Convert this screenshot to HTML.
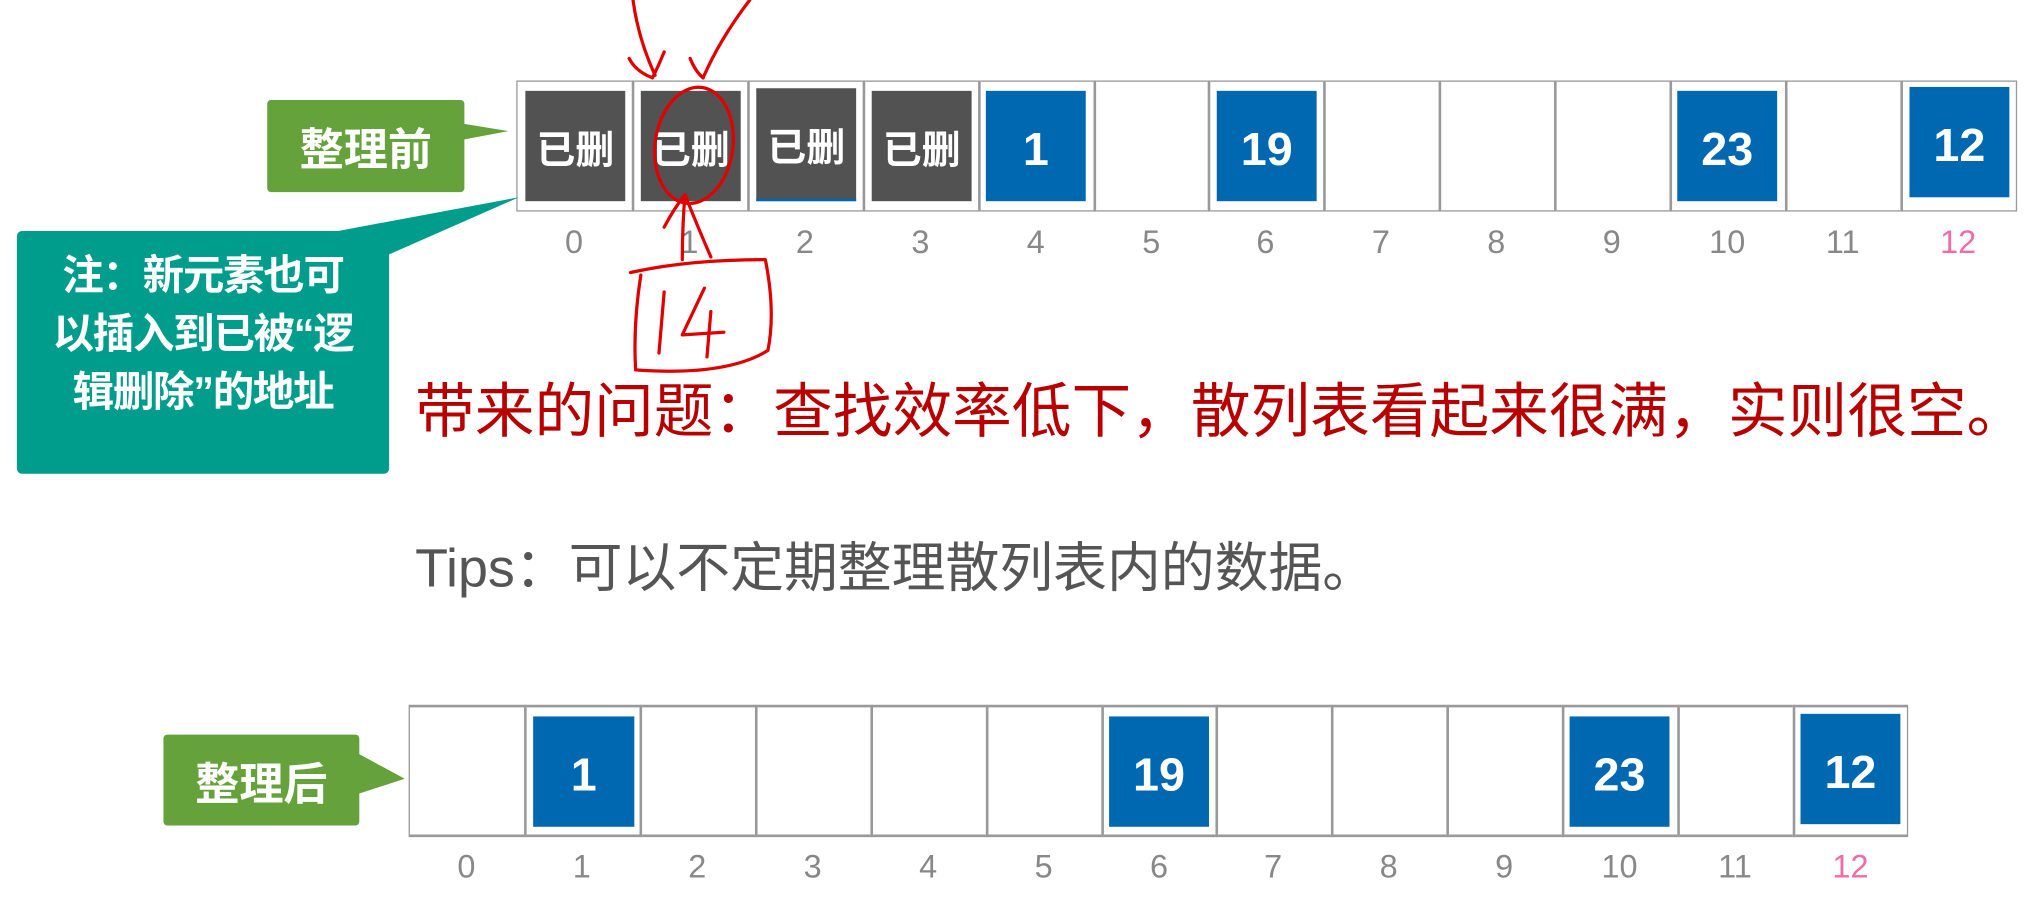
<!DOCTYPE html>
<html><head><meta charset="utf-8"><style>
html,body{margin:0;padding:0;background:#fff;overflow:hidden;}
body{width:2034px;height:915px;}
#w{position:absolute;left:0;top:0;width:1568px;height:705px;transform:scale(1.29719,1.2979);transform-origin:0 0;font-family:"Liberation Sans","Noto Sans CJK SC",sans-serif;}
.a{position:absolute;}
.cell{position:absolute;border:1px solid #999;box-sizing:border-box;background:#fff;}
.box{position:absolute;color:#fff;display:flex;align-items:center;justify-content:center;font-weight:bold;}
.blue{background:#0068b0;font-size:36px;padding-top:4px;box-sizing:border-box;}
.gray{background:#525252;font-size:30px;font-weight:bold;}
.idx{position:absolute;width:89px;text-align:center;color:#888;font-size:25px;}
.lbl{position:absolute;background:#66a23c;color:#fff;font-weight:bold;font-size:34px;display:flex;align-items:center;justify-content:center;border-radius:3px;}
</style></head><body><div id="w">

<div class="a" style="left:398px;top:62px;width:1157px;height:101px;border:1px solid #999;box-sizing:border-box;"></div>
<div class="cell" style="left:487px;top:62px;width:1px;height:101px;"></div>
<div class="cell" style="left:576px;top:62px;width:1px;height:101px;"></div>
<div class="cell" style="left:665px;top:62px;width:1px;height:101px;"></div>
<div class="cell" style="left:754px;top:62px;width:1px;height:101px;"></div>
<div class="cell" style="left:843px;top:62px;width:1px;height:101px;"></div>
<div class="cell" style="left:931px;top:62px;width:1px;height:101px;"></div>
<div class="cell" style="left:1020px;top:62px;width:1px;height:101px;"></div>
<div class="cell" style="left:1109px;top:62px;width:1px;height:101px;"></div>
<div class="cell" style="left:1198px;top:62px;width:1px;height:101px;"></div>
<div class="cell" style="left:1287px;top:62px;width:1px;height:101px;"></div>
<div class="cell" style="left:1376px;top:62px;width:1px;height:101px;"></div>
<div class="cell" style="left:1465px;top:62px;width:1px;height:101px;"></div>

<div class="box gray" style="left:405px;top:70px;width:77px;height:85px;">已删</div>
<div class="box gray" style="left:494px;top:70px;width:77px;height:85px;">已删</div>
<div class="box gray" style="left:583px;top:68px;width:77px;height:85px;border-bottom:2px solid #0068b0;">已删</div>
<div class="box gray" style="left:672px;top:70px;width:77px;height:85px;">已删</div>
<div class="box blue" style="left:760px;top:70px;width:77px;height:85px;">1</div>
<div class="box blue" style="left:938px;top:70px;width:77px;height:85px;">19</div>
<div class="box blue" style="left:1293px;top:70px;width:77px;height:85px;">23</div>
<div class="box blue" style="left:1472px;top:67px;width:77px;height:85px;">12</div>

<div class="idx" style="left:398px;top:173px;">0</div>
<div class="idx" style="left:487px;top:173px;">1</div>
<div class="idx" style="left:576px;top:173px;">2</div>
<div class="idx" style="left:665px;top:173px;">3</div>
<div class="idx" style="left:754px;top:173px;">4</div>
<div class="idx" style="left:843px;top:173px;">5</div>
<div class="idx" style="left:931px;top:173px;">6</div>
<div class="idx" style="left:1020px;top:173px;">7</div>
<div class="idx" style="left:1109px;top:173px;">8</div>
<div class="idx" style="left:1198px;top:173px;">9</div>
<div class="idx" style="left:1287px;top:173px;">10</div>
<div class="idx" style="left:1376px;top:173px;">11</div>
<div class="idx" style="left:1465px;top:173px;color:#f06ba8;">12</div>

<svg class="a" style="left:0;top:0" width="1568" height="705">
<polygon points="355,95 392,101 355,108" fill="#66a23c"/>
<polygon points="255,179 400,152 300,196" fill="#009c8c"/>
<polygon points="275,580 312,600 275,612" fill="#66a23c"/>
</svg>
<div class="lbl" style="left:206px;top:77px;width:152px;height:71px;">整理前</div>
<div class="a" style="left:13px;top:178px;width:287px;height:187px;background:#009c8c;border-radius:4px;color:#fff;font-weight:bold;font-size:32px;line-height:45px;text-align:center;padding-top:12px;box-sizing:border-box;white-space:nowrap;letter-spacing:-1px;">注：新元素也可<br>以插入到已被“逻<br>辑删除”的地址</div>

<div class="a" style="left:320px;top:288px;color:#b80000;font-size:46px;white-space:nowrap;line-height:58px;">带来的问题：查找效率低下，散列表看起来很满，实则很空。</div>
<div class="a" style="left:320px;top:413px;color:#555;font-size:41.5px;white-space:nowrap;line-height:50px;">Tips：可以不定期整理散列表内的数据。</div>

<div class="a" style="left:315px;top:543px;width:1156px;height:102px;border:1px solid #999;border-top:2px solid #999;border-bottom:2px solid #999;box-sizing:border-box;"></div>
<div class="cell" style="left:404px;top:543px;width:1px;height:102px;"></div>
<div class="cell" style="left:493px;top:543px;width:1px;height:102px;"></div>
<div class="cell" style="left:582px;top:543px;width:1px;height:102px;"></div>
<div class="cell" style="left:671px;top:543px;width:1px;height:102px;"></div>
<div class="cell" style="left:760px;top:543px;width:1px;height:102px;"></div>
<div class="cell" style="left:849px;top:543px;width:1px;height:102px;"></div>
<div class="cell" style="left:937px;top:543px;width:1px;height:102px;"></div>
<div class="cell" style="left:1026px;top:543px;width:1px;height:102px;"></div>
<div class="cell" style="left:1115px;top:543px;width:1px;height:102px;"></div>
<div class="cell" style="left:1204px;top:543px;width:1px;height:102px;"></div>
<div class="cell" style="left:1293px;top:543px;width:1px;height:102px;"></div>
<div class="cell" style="left:1382px;top:543px;width:1px;height:102px;"></div>

<div class="box blue" style="left:411px;top:552px;width:78px;height:85px;">1</div>
<div class="box blue" style="left:855px;top:552px;width:77px;height:85px;">19</div>
<div class="box blue" style="left:1210px;top:552px;width:77px;height:85px;">23</div>
<div class="box blue" style="left:1388px;top:550px;width:77px;height:85px;">12</div>

<div class="idx" style="left:315px;top:654px;">0</div>
<div class="idx" style="left:404px;top:654px;">1</div>
<div class="idx" style="left:493px;top:654px;">2</div>
<div class="idx" style="left:582px;top:654px;">3</div>
<div class="idx" style="left:671px;top:654px;">4</div>
<div class="idx" style="left:760px;top:654px;">5</div>
<div class="idx" style="left:849px;top:654px;">6</div>
<div class="idx" style="left:937px;top:654px;">7</div>
<div class="idx" style="left:1026px;top:654px;">8</div>
<div class="idx" style="left:1115px;top:654px;">9</div>
<div class="idx" style="left:1204px;top:654px;">10</div>
<div class="idx" style="left:1293px;top:654px;">11</div>
<div class="idx" style="left:1382px;top:654px;color:#f06ba8;">12</div>

<div class="lbl" style="left:126px;top:566px;width:151px;height:70px;">整理后</div>

<svg class="a" style="left:0;top:0" width="1568" height="705" fill="none" stroke="#e00000" stroke-width="2.5" stroke-linecap="round" stroke-linejoin="round">
<path d="M488,0 Q492,30 505,58"/>
<path d="M485,45 Q490,55 503,60 Q508,50 512,40"/>
<path d="M578,0 Q555,30 542,60"/>
<path d="M532,45 Q536,55 542,60"/>
<ellipse cx="535" cy="112" rx="30" ry="45" transform="rotate(8 535 112)"/>
<path d="M526,200 Q526,175 528,150"/>
<path d="M512,175 Q520,160 528,150 Q538,175 548,198"/>
<path d="M486,210 Q530,200 590,200 Q598,240 592,270 Q560,290 490,285 Q488,250 494,212"/>
<path d="M512,225 L508,272"/>
<path d="M543,222 L526,258 L558,256"/>
<path d="M548,240 L545,275"/>
</svg>
</div></body></html>
